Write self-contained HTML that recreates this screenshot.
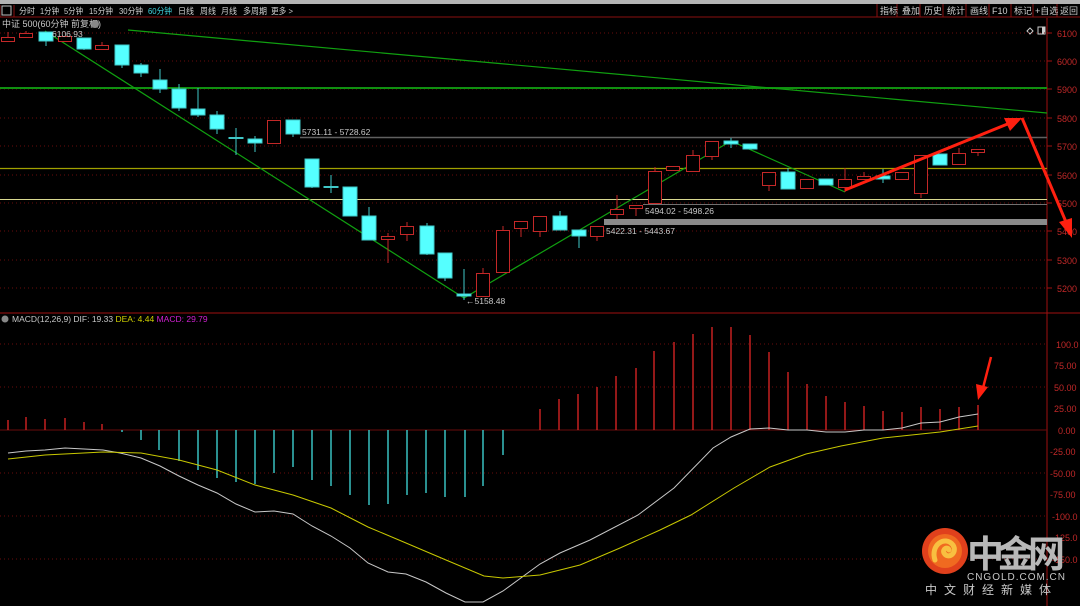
<!DOCTYPE html>
<html><head><meta charset="utf-8"><style>
html,body{margin:0;padding:0;background:#000;width:1080px;height:606px;overflow:hidden}
svg{display:block}
text{font-family:"Liberation Sans","Noto Sans CJK SC",sans-serif}
</style></head><body>
<svg width="1080" height="606" viewBox="0 0 1080 606" xmlns="http://www.w3.org/2000/svg">
<rect width="1080" height="606" fill="#000"/>
<!-- top bar -->
<rect x="0" y="0" width="1080" height="4" fill="#b4b4b4"/>
<line x1="0" y1="17" x2="1080" y2="17" stroke="#8a1010" stroke-width="1"/>
<rect x="2" y="6" width="9" height="9" fill="none" stroke="#c0c0c0" stroke-width="1"/>
<line x1="0" y1="5" x2="0" y2="17" stroke="#8a1010"/>
<line x1="14" y1="5" x2="14" y2="17" stroke="#8a1010"/>
<g font-size="8.5" fill="#d0d0d0">
<text x="19" y="14" textLength="16" lengthAdjust="spacingAndGlyphs">分时</text>
<text x="40" y="14" textLength="19" lengthAdjust="spacingAndGlyphs">1分钟</text>
<text x="64" y="14" textLength="19" lengthAdjust="spacingAndGlyphs">5分钟</text>
<text x="89" y="14" textLength="24" lengthAdjust="spacingAndGlyphs">15分钟</text>
<text x="119" y="14" textLength="24" lengthAdjust="spacingAndGlyphs">30分钟</text>
<text x="148" y="14" fill="#3fd6e0" textLength="24" lengthAdjust="spacingAndGlyphs">60分钟</text>
<text x="178" y="14" textLength="16" lengthAdjust="spacingAndGlyphs">日线</text>
<text x="200" y="14" textLength="16" lengthAdjust="spacingAndGlyphs">周线</text>
<text x="221" y="14" textLength="16" lengthAdjust="spacingAndGlyphs">月线</text>
<text x="243" y="14" textLength="24" lengthAdjust="spacingAndGlyphs">多周期</text>
<text x="271" y="14" textLength="22" lengthAdjust="spacingAndGlyphs">更多 &gt;</text>
</g>
<g stroke="#8a1010"><line x1="877" y1="4" x2="877" y2="17"/><line x1="897" y1="4" x2="897" y2="17"/><line x1="920" y1="4" x2="920" y2="17"/><line x1="943" y1="4" x2="943" y2="17"/><line x1="966" y1="4" x2="966" y2="17"/><line x1="989" y1="4" x2="989" y2="17"/><line x1="1011" y1="4" x2="1011" y2="17"/><line x1="1033" y1="4" x2="1033" y2="17"/><line x1="1057" y1="4" x2="1057" y2="17"/></g>
<g font-size="9" fill="#d0d0d0"><text x="880" y="14">指标</text><text x="902" y="14">叠加</text><text x="924" y="14">历史</text><text x="947" y="14">统计</text><text x="970" y="14">画线</text><text x="992" y="14">F10</text><text x="1014" y="14">标记</text><text x="1035" y="14">+自选</text><text x="1060" y="14">返回</text></g>
<!-- title -->
<text x="2" y="27" font-size="9" fill="#c8c8c8">中证 500(60分钟 前复权)</text>
<circle cx="95" cy="24" r="4" fill="#888"/>
<path d="M1027 31 l3-3 3 3-3 3z" fill="none" stroke="#ccc"/>
<rect x="1038" y="27" width="7" height="7" fill="none" stroke="#ccc"/><rect x="1042" y="27" width="3" height="7" fill="#ccc"/>
<!-- axis -->
<line x1="1047" y1="18" x2="1047" y2="606" stroke="#a01010"/>
<line x1="0" y1="313" x2="1080" y2="313" stroke="#a01010"/>
<g stroke="#6a0c0c" stroke-dasharray="1,3">
<line x1="0" y1="33" x2="1047" y2="33"/><line x1="0" y1="61" x2="1047" y2="61"/><line x1="0" y1="89" x2="1047" y2="89"/><line x1="0" y1="118" x2="1047" y2="118"/><line x1="0" y1="146" x2="1047" y2="146"/><line x1="0" y1="175" x2="1047" y2="175"/><line x1="0" y1="203" x2="1047" y2="203"/><line x1="0" y1="231" x2="1047" y2="231"/><line x1="0" y1="260" x2="1047" y2="260"/><line x1="0" y1="288" x2="1047" y2="288"/>
<line x1="0" y1="344" x2="1047" y2="344"/><line x1="0" y1="387" x2="1047" y2="387"/><line x1="0" y1="473" x2="1047" y2="473"/><line x1="0" y1="516" x2="1047" y2="516"/><line x1="0" y1="559" x2="1047" y2="559"/>
</g>
<line x1="0" y1="430" x2="1047" y2="430" stroke="#6a0c0c"/>
<g stroke="#a01010"><line x1="1047" y1="33" x2="1052" y2="33"/><line x1="1047" y1="61" x2="1052" y2="61"/><line x1="1047" y1="89" x2="1052" y2="89"/><line x1="1047" y1="118" x2="1052" y2="118"/><line x1="1047" y1="146" x2="1052" y2="146"/><line x1="1047" y1="175" x2="1052" y2="175"/><line x1="1047" y1="203" x2="1052" y2="203"/><line x1="1047" y1="231" x2="1052" y2="231"/><line x1="1047" y1="260" x2="1052" y2="260"/><line x1="1047" y1="288" x2="1052" y2="288"/></g>
<g font-size="9" fill="#c02828">
<text x="1057" y="37">6100</text><text x="1057" y="65">6000</text><text x="1057" y="93">5900</text><text x="1057" y="122">5800</text><text x="1057" y="150">5700</text><text x="1057" y="179">5600</text><text x="1057" y="207">5500</text><text x="1057" y="235">5400</text><text x="1057" y="264">5300</text><text x="1057" y="292">5200</text>
<text x="1056" y="348">100.0</text><text x="1054" y="369">75.00</text><text x="1054" y="391">50.00</text><text x="1054" y="412">25.00</text><text x="1058" y="434">0.00</text><text x="1050" y="455">-25.00</text><text x="1050" y="477">-50.00</text><text x="1050" y="498">-75.00</text><text x="1052" y="520">-100.0</text><text x="1052" y="541">-125.0</text><text x="1052" y="563">-150.0</text>
</g>
<!-- horizontal levels -->
<line x1="0" y1="88" x2="1047" y2="88" stroke="#109010" stroke-width="2"/>
<line x1="0" y1="168.5" x2="1047" y2="168.5" stroke="#a0a000" stroke-width="1.3"/>
<line x1="0" y1="199.5" x2="1047" y2="199.5" stroke="#d8d890" stroke-width="1"/>
<line x1="300" y1="137.5" x2="1047" y2="137.5" stroke="#606060" stroke-width="1.5"/>
<line x1="643" y1="204.5" x2="1047" y2="204.5" stroke="#707070" stroke-width="1"/>
<rect x="604" y="219" width="443" height="6" fill="#8a8a8a"/>
<!-- trend lines -->
<line x1="128" y1="30" x2="1047" y2="113" stroke="#10a010" stroke-width="1.2"/>
<polyline points="45,31 464,298 731,141 845,192" fill="none" stroke="#10a010" stroke-width="1.2"/>
<!-- candles -->
<g stroke="#c42828" fill="#000" stroke-width="1">
<line x1="8" y1="32" x2="8" y2="37"/><rect x="1.5" y="37.5" width="13" height="4"/>
<line x1="26" y1="31" x2="26" y2="33"/><rect x="19.5" y="33.5" width="13" height="4"/>
<rect x="58.5" y="36.5" width="13" height="5"/>
<line x1="102" y1="42" x2="102" y2="45"/><rect x="95.5" y="45.5" width="13" height="4"/>
<rect x="267.5" y="120.5" width="13" height="23"/>
<line x1="388" y1="233" x2="388" y2="263"/><rect x="381.5" y="236.5" width="13" height="3"/>
<line x1="407" y1="222" x2="407" y2="241"/><rect x="400.5" y="226.5" width="13" height="8"/>
<line x1="483" y1="268" x2="483" y2="273"/><rect x="476.5" y="273.5" width="13" height="23"/>
<line x1="503" y1="226" x2="503" y2="230"/><rect x="496.5" y="230.5" width="13" height="42"/>
<line x1="521" y1="229" x2="521" y2="237"/><rect x="514.5" y="221.5" width="13" height="7"/>
<line x1="540" y1="232" x2="540" y2="237"/><rect x="533.5" y="216.5" width="13" height="15"/>
<line x1="597" y1="237" x2="597" y2="241"/><rect x="590.5" y="226.5" width="13" height="10"/>
<line x1="617" y1="195" x2="617" y2="219"/><rect x="610.5" y="209.5" width="13" height="5"/>
<line x1="636" y1="208" x2="636" y2="216"/><rect x="629.5" y="205.5" width="13" height="3"/>
<line x1="655" y1="167" x2="655" y2="171"/><rect x="648.5" y="171.5" width="13" height="32"/>
<rect x="666.5" y="166.5" width="13" height="4"/>
<line x1="693" y1="150" x2="693" y2="155"/><rect x="686.5" y="155.5" width="13" height="16"/>
<line x1="712" y1="157" x2="712" y2="160"/><rect x="705.5" y="141.5" width="13" height="15"/>
<line x1="769" y1="186" x2="769" y2="191"/><rect x="762.5" y="172.5" width="13" height="13"/>
<rect x="800.5" y="179.5" width="13" height="9"/>
<line x1="845" y1="168" x2="845" y2="192"/><rect x="838.5" y="179.5" width="13" height="8"/>
<line x1="864" y1="172" x2="864" y2="176"/><rect x="857.5" y="176.5" width="13" height="3"/>
<rect x="895.5" y="172.5" width="13" height="7"/>
<line x1="921" y1="194" x2="921" y2="198"/><rect x="914.5" y="155.5" width="13" height="38"/>
<line x1="959" y1="148" x2="959" y2="153"/><rect x="952.5" y="153.5" width="13" height="11"/>
<line x1="978" y1="153" x2="978" y2="156"/><rect x="971.5" y="149.5" width="13" height="3"/>
</g>
<g stroke="#40c8c8" fill="#55ffff" stroke-width="1">
<line x1="46" y1="32" x2="46" y2="46"/><rect x="39" y="32" width="14" height="9"/>
<line x1="84" y1="38" x2="84" y2="50"/><rect x="77" y="38" width="14" height="11"/>
<line x1="122" y1="45" x2="122" y2="68"/><rect x="115" y="45" width="14" height="20"/>
<line x1="141" y1="63" x2="141" y2="77"/><rect x="134" y="65" width="14" height="8"/>
<line x1="160" y1="69" x2="160" y2="93"/><rect x="153" y="80" width="14" height="9"/>
<line x1="179" y1="84" x2="179" y2="111"/><rect x="172" y="89" width="14" height="19"/>
<line x1="198" y1="88" x2="198" y2="117"/><rect x="191" y="109" width="14" height="6"/>
<line x1="217" y1="111" x2="217" y2="134"/><rect x="210" y="115" width="14" height="14"/>
<line x1="236" y1="128" x2="236" y2="155"/><rect x="229" y="137.5" width="14" height="1"/>
<line x1="255" y1="136" x2="255" y2="152"/><rect x="248" y="139" width="14" height="4"/>
<line x1="293" y1="120" x2="293" y2="137"/><rect x="286" y="120" width="14" height="14"/>
<line x1="312" y1="159" x2="312" y2="188"/><rect x="305" y="159" width="14" height="28"/>
<line x1="331" y1="175" x2="331" y2="193"/><rect x="324" y="186.5" width="14" height="1"/>
<rect x="343" y="187" width="14" height="29"/>
<line x1="369" y1="207" x2="369" y2="240"/><rect x="362" y="216" width="14" height="24"/>
<line x1="427" y1="223" x2="427" y2="255"/><rect x="420" y="226" width="14" height="28"/>
<line x1="445" y1="253" x2="445" y2="281"/><rect x="438" y="253" width="14" height="25"/>
<line x1="464" y1="269" x2="464" y2="300"/><rect x="457" y="294" width="14" height="2"/>
<line x1="560" y1="211" x2="560" y2="230"/><rect x="553" y="216" width="14" height="14"/>
<line x1="579" y1="230" x2="579" y2="248"/><rect x="572" y="230" width="14" height="6"/>
<line x1="731" y1="138" x2="731" y2="148"/><rect x="724" y="141" width="14" height="3"/>
<rect x="743" y="144" width="14" height="5"/>
<line x1="788" y1="168" x2="788" y2="189"/><rect x="781" y="172" width="14" height="17"/>
<rect x="819" y="179" width="14" height="6"/>
<line x1="883" y1="169" x2="883" y2="183"/><rect x="876" y="176" width="14" height="3"/>
<rect x="933" y="154" width="14" height="11"/>
</g>
<!-- labels -->
<g font-size="8.5" fill="#c8c8c8">
<text x="52" y="37">6106.93</text>
<text x="302" y="135">5731.11 - 5728.62</text>
<text x="645" y="214">5494.02 - 5498.26</text>
<text x="606" y="234">5422.31 - 5443.67</text>
<text x="466" y="304">←5158.48</text>
</g>
<!-- red arrows -->
<line x1="845" y1="190" x2="1010" y2="123" stroke="#ff2010" stroke-width="3"/>
<path d="M1022 118 L1004 118 L1010 131 Z" fill="#ff2010"/>
<line x1="1022" y1="118" x2="1066" y2="222" stroke="#ff2010" stroke-width="3"/>
<path d="M1072 238 L1059 222 L1072 218 Z" fill="#ff2010"/>
<!-- MACD label -->
<circle cx="5" cy="319" r="3.5" fill="#888"/>
<text x="12" y="322" font-size="8.5" fill="#c8c8c8">MACD(12,26,9)  DIF: 19.33 <tspan fill="#d0d000">DEA: 4.44</tspan> <tspan fill="#d020d0">MACD: 29.79</tspan></text>
<!-- MACD bars -->
<g stroke="#c42020" stroke-width="1.5">
<line x1="8" y1="430" x2="8" y2="420"/><line x1="26" y1="430" x2="26" y2="417"/><line x1="45" y1="430" x2="45" y2="419"/><line x1="65" y1="430" x2="65" y2="418"/><line x1="84" y1="430" x2="84" y2="422"/><line x1="102" y1="430" x2="102" y2="424"/>
<line x1="540" y1="430" x2="540" y2="409"/><line x1="559" y1="430" x2="559" y2="399"/><line x1="578" y1="430" x2="578" y2="394"/><line x1="597" y1="430" x2="597" y2="387"/><line x1="616" y1="430" x2="616" y2="376"/><line x1="636" y1="430" x2="636" y2="368"/><line x1="654" y1="430" x2="654" y2="351"/><line x1="674" y1="430" x2="674" y2="342"/><line x1="693" y1="430" x2="693" y2="334"/><line x1="712" y1="430" x2="712" y2="327"/><line x1="731" y1="430" x2="731" y2="327"/><line x1="750" y1="430" x2="750" y2="335"/><line x1="769" y1="430" x2="769" y2="352"/><line x1="788" y1="430" x2="788" y2="372"/><line x1="807" y1="430" x2="807" y2="384"/><line x1="826" y1="430" x2="826" y2="396"/><line x1="845" y1="430" x2="845" y2="402"/><line x1="864" y1="430" x2="864" y2="406"/><line x1="883" y1="430" x2="883" y2="411"/><line x1="902" y1="430" x2="902" y2="412"/><line x1="921" y1="430" x2="921" y2="407"/><line x1="940" y1="430" x2="940" y2="409"/><line x1="959" y1="430" x2="959" y2="407"/><line x1="978" y1="430" x2="978" y2="405"/>
</g>
<g stroke="#38c0c0" stroke-width="1.5">
<line x1="122" y1="430" x2="122" y2="432"/><line x1="141" y1="430" x2="141" y2="440"/><line x1="159" y1="430" x2="159" y2="450"/><line x1="179" y1="430" x2="179" y2="461"/><line x1="198" y1="430" x2="198" y2="470"/><line x1="217" y1="430" x2="217" y2="478"/><line x1="236" y1="430" x2="236" y2="482"/><line x1="255" y1="430" x2="255" y2="484"/><line x1="274" y1="430" x2="274" y2="473"/><line x1="293" y1="430" x2="293" y2="467"/><line x1="312" y1="430" x2="312" y2="480"/><line x1="331" y1="430" x2="331" y2="486"/><line x1="350" y1="430" x2="350" y2="495"/><line x1="369" y1="430" x2="369" y2="505"/><line x1="388" y1="430" x2="388" y2="504"/><line x1="407" y1="430" x2="407" y2="495"/><line x1="426" y1="430" x2="426" y2="493"/><line x1="445" y1="430" x2="445" y2="497"/><line x1="465" y1="430" x2="465" y2="497"/><line x1="483" y1="430" x2="483" y2="486"/><line x1="503" y1="430" x2="503" y2="455"/>
</g>
<polyline fill="none" stroke="#c8c8c8" stroke-width="1" points="8,453 26,451 45,450 65,448 84,449 103,450 120,453 141,458 160,466 179,476 198,485 217,493 236,504 255,512 274,511 293,514 312,526 331,536 350,548 368,563 388,572 406,574 426,582 446,593 465,602 483,602 503,591 540,564 560,553 590,540 638,515 674,488 713,448 731,437 750,429 769,428 788,430 807,430 826,432 845,432 864,430 883,430 902,428 921,423 940,422 959,417 978,414"/>
<polyline fill="none" stroke="#c8c800" stroke-width="1" points="8,459 45,455 103,452 141,453 179,460 217,470 255,485 293,495 331,508 368,527 406,543 446,560 484,576 503,578 540,575 580,565 620,548 660,530 691,515 734,488 770,467 806,454 841,446 883,438 940,432 978,426"/>
<line x1="991" y1="357" x2="983" y2="388" stroke="#ff2010" stroke-width="2.5"/>
<path d="M978 400 L976 384 L988 387 Z" fill="#ff2010"/>
<!-- logo -->
<circle cx="945" cy="551" r="23" fill="#e0401c"/>
<circle cx="945" cy="551" r="17" fill="#f06a20"/>
<path d="M935 560 C930 545 945 535 953 545 C958 553 948 560 944 553 C942 549 948 546 949 550" fill="none" stroke="#f8c040" stroke-width="5" stroke-linecap="round"/>
<text x="967" y="567" font-size="37" font-weight="bold" fill="#b8b8b8" font-family="'Noto Sans CJK SC',sans-serif" textLength="98">中金网</text>
<text x="967" y="580" font-size="10" fill="#c8c8c8" textLength="98">CNGOLD.COM.CN</text>
<text x="925" y="594" font-size="12" fill="#c8c8c8" letter-spacing="7">中文财经新媒体</text>
</svg>
</body></html>
